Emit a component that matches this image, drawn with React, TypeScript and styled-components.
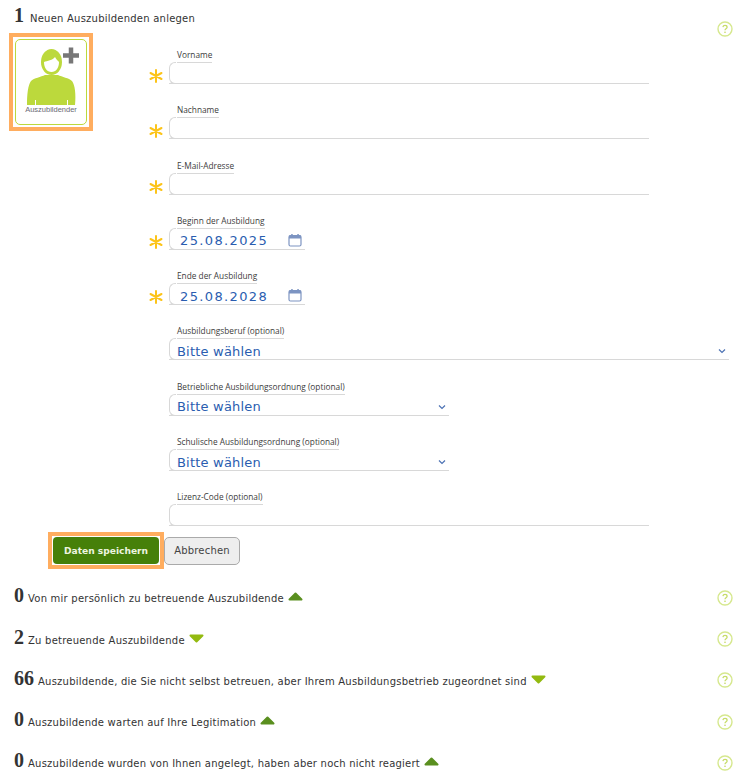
import styled, { createGlobalStyle } from "styled-components";

const GlobalStyle = createGlobalStyle`
  html, body {
    margin: 0;
    padding: 0;
    background: #fff;
  }
  body {
    font-family: "DejaVu Sans", Verdana, sans-serif;
    color: #333;
  }
`;

const Page = styled.div`
  width: 751px;
  height: 780px;
  overflow: hidden;
`;

// Title TOP
const Head = styled.div`
  display: flex;
  justify-content: space-between;
  align-items: flex-start;
  height: 33px;
  padding: 3px 18px 0 14px;
  box-sizing: border-box;
`;

const Title = styled.div`
  display: flex;
  align-items: baseline;
  font-size: 10px;
  letter-spacing: 0.23px;
  color: #333;
`;

const Count = styled.b<{ $gap?: number }>`
  font-family: "Liberation Serif", Georgia, serif;
  font-size: 20px;
  line-height: 24px;
  margin-right: ${(p) => p.$gap ?? 4}px;
  letter-spacing: 0;
  color: #333;
`;

const HelpBox = styled.span<{ $top?: number }>`
  display: block;
  margin-top: ${(p) => p.$top ?? 0}px;
  width: 16px;
  height: 16px;
  flex: none;
`;

// Form MIDDLE
const Body = styled.div`
  display: grid;
  grid-template-columns: 149px 1fr;
`;

const TileFrame = styled.div`
  margin-left: 9px;
  width: 84px;
  height: 98px;
  box-sizing: border-box;
  border: 4px solid #ffad5f;
  padding: 2px;
`;

const Tile = styled.div`
  height: 100%;
  box-sizing: border-box;
  border: 1px solid #bcd93c;
  border-radius: 5px;
  display: flex;
  flex-direction: column;
  align-items: center;
  padding-top: 7px;
`;

const TileLabel = styled.span`
  font-family: "Liberation Sans", Arial, sans-serif;
  font-size: 7.5px;
  line-height: 10px;
  color: #6b6b75;
`;

const Form = styled.div`
  padding-top: 16px;
  display: flex;
  flex-direction: column;
  gap: 20.3px;
`;

const Row = styled.div`
  display: flex;
  align-items: flex-end;
`;

const Star = styled.span`
  display: block;
  width: 20px;
  height: 14px;
  flex: none;
  margin-bottom: 2px;
`;

const Field = styled.div<{ $width: number; $indent?: boolean }>`
  width: ${(p) => p.$width}px;
  margin-left: ${(p) => (p.$indent ? 0 : 20)}px;
`;

const Label = styled.label`
  display: block;
  width: fit-content;
  margin-left: 8px;
  height: 14px;
  line-height: 12px;
  box-sizing: border-box;
  border-bottom: 1px solid #d8d8d8;
  font-family: "Open Sans", "DejaVu Sans", sans-serif;
  font-size: 8.3px;
  color: #3c3c3c;
`;

const Box = styled.div`
  position: relative;
  height: 21px;
  box-sizing: border-box;
  border-bottom: 1px solid #d8d8d8;
  padding: 4px 3px 0 11px;
  display: flex;
  align-items: center;
  justify-content: space-between;
  &::before {
    content: "";
    position: absolute;
    left: 0;
    top: -1px;
    bottom: -1px;
    width: 7px;
    box-sizing: border-box;
    border: 1px solid #d8d8d8;
    border-right: 0;
    border-radius: 6px 0 0 6px;
  }
`;

const DateValue = styled.span`
  font-size: 13px;
  letter-spacing: 1.36px;
  color: #2a5db0;
`;

const SelectValue = styled.span`
  font-size: 13px;
  letter-spacing: 0.2px;
  margin-left: -3px;
  color: #2a5db0;
`;

const Buttons = styled.div`
  display: flex;
  align-items: center;
  margin: 6px 0 0 48px;
`;

const SaveFrame = styled.div`
  border: 4px solid #ffad5f;
  padding: 1px;
  height: 37px;
  box-sizing: border-box;
  display: flex;
`;

const SaveButton = styled.button`
  width: 106px;
  border: 0;
  border-radius: 4px;
  background: #468009;
  color: #eef5e0;
  font-family: "DejaVu Sans", sans-serif;
  font-weight: bold;
  font-size: 9.1px;
  padding: 0;
`;

const CancelButton = styled.button`
  width: 76px;
  height: 28px;
  box-sizing: border-box;
  background: #eeeeee;
  border: 1px solid #aaa;
  border-radius: 5px;
  color: #444;
  font-family: "DejaVu Sans", sans-serif;
  font-size: 10px;
  letter-spacing: 0.2px;
  padding: 0;
`;

// List BOTTOM
const List = styled.div`
  display: flex;
  flex-direction: column;
  margin-top: 14px;
`;

const ListRow = styled.div`
  height: 41.25px;
  box-sizing: border-box;
  padding: 0 18px 0 14px;
  display: flex;
  justify-content: space-between;
  align-items: flex-start;
`;

const Arrow = styled.span`
  display: inline-block;
  margin: 3px 0 0 4px;
  width: 15px;
  height: 9px;
  align-self: center;
`;

const HelpIcon = ({ top }: { top?: number }) => (
  <HelpBox $top={top}>
    <svg width="16" height="16" viewBox="0 0 16 16" fill="none">
      <circle cx="8" cy="8" r="7" stroke="#d6e88e" strokeWidth="1.4" />
      <path d="M5.9 6.2c.2-1.2 1-1.800 2.100-1.800 1.200 0 2.100.7 2.100 1.800 0 1.600-2.100 1.600-2.100 3" stroke="#c6dc68" strokeWidth="1.300" />
      <rect x="7.300" y="10.600" width="1.400" height="1.400" fill="#c6dc68" />
    </svg>
  </HelpBox>
);

const StarIcon = () => (
  <Star>
    <svg width="14" height="14" viewBox="0 0 14 14" stroke="#fcc419" strokeWidth="2" strokeLinecap="round">
      <path d="M7 1v12M1.500 4 12.500 10M1.500 10 12.500 4" />
    </svg>
  </Star>
);

const CalendarIcon = () => (
  <svg width="14" height="14" viewBox="0 1 14 14" fill="none">
    <rect x="1" y="2.500" width="12" height="10.500" rx="1.500" stroke="#7d94c2" strokeWidth="1.200" />
    <rect x="1" y="2.500" width="12" height="3" fill="#7d94c2" />
    <rect x="3.200" y="0.500" width="1.500" height="3" fill="#7d94c2" />
    <rect x="9.300" y="0.500" width="1.500" height="3" fill="#7d94c2" />
  </svg>
);

const Chevron = () => (
  <svg width="8" height="6" viewBox="0 0 8 6" fill="none">
    <path d="M1 1.500 4 4.500 7 1.500" stroke="#4c72b4" strokeWidth="1.200" />
  </svg>
);

const UpArrow = () => (
  <Arrow>
    <svg width="15" height="9" viewBox="0 0 15 9">
      <path d="M7.500 1.500 13.500 7.500H1.500z" fill="#5a8f1f" stroke="#5a8f1f" strokeWidth="2" strokeLinejoin="round" />
    </svg>
  </Arrow>
);

const DownArrow = () => (
  <Arrow>
    <svg width="15" height="9" viewBox="0 0 15 9">
      <path d="M7.500 7.500 13.500 1.500H1.500z" fill="#93ba10" stroke="#93ba10" strokeWidth="2" strokeLinejoin="round" />
    </svg>
  </Arrow>
);

const TraineeIcon = () => (
  <svg width="62" height="58" viewBox="0 0 62 58" style={{ display: "block" }}>
    <path
      d="M7 58c0-11 1-20 4-24 3-3 10-4 14-6h13c4 2 11 3 14 6 3 4 4 13 3 24H48v-5h-1v5H16v-5h-1v5z"
      fill="#bcd93c"
    />
    <ellipse cx="31.500" cy="15" rx="10.500" ry="13" fill="#bcd93c" />
    <path d="M24 15c3-1 9-2 11-5 1 2 3 4 4 5 0 6-3 10-7.500 10S24 21 24 15z" fill="#fff" />
    <path d="M43 8.500h16M51 .5v16" stroke="#777" strokeWidth="4.500" />
  </svg>
);

const textFields = ["Vorname", "Nachname", "E-Mail-Adresse"];

const selects = [
  { label: "Ausbildungsberuf (optional)", width: 560 },
  { label: "Betriebliche Ausbildungsordnung (optional)", width: 280 },
  { label: "Schulische Ausbildungsordnung (optional)", width: 280 },
];

const rows = [
  { count: "0", text: "Von mir persönlich zu betreuende Auszubildende", up: true },
  { count: "2", text: "Zu betreuende Auszubildende", up: false },
  { count: "66", text: "Auszubildende, die Sie nicht selbst betreuen, aber Ihrem Ausbildungsbetrieb zugeordnet sind", up: false },
  { count: "0", text: "Auszubildende warten auf Ihre Legitimation", up: true },
  { count: "0", text: "Auszubildende wurden von Ihnen angelegt, haben aber noch nicht reagiert", up: true },
];

const App = () => {
  return (
    <Page>
      <GlobalStyle />
      <Head>
        <Title>
          <Count $gap={6}>1</Count>
          Neuen Auszubildenden anlegen
        </Title>
        <HelpIcon top={18} />
      </Head>
      <Body>
        <TileFrame>
          <Tile>
            <TraineeIcon />
            <TileLabel>Auszubildender</TileLabel>
          </Tile>
        </TileFrame>
        <Form>
          {textFields.map((label) => (
            <Row key={label}>
              <StarIcon />
              <Field $width={480} $indent>
                <Label>{label}</Label>
                <Box />
              </Field>
            </Row>
          ))}
          {["25.08.2025", "25.08.2028"].map((value, i) => (
            <Row key={value}>
              <StarIcon />
              <Field $width={136} $indent>
                <Label>{i === 0 ? "Beginn der Ausbildung" : "Ende der Ausbildung"}</Label>
                <Box>
                  <DateValue>{value}</DateValue>
                  <CalendarIcon />
                </Box>
              </Field>
            </Row>
          ))}
          {selects.map((item) => (
            <Row key={item.label}>
              <Field $width={item.width}>
                <Label>{item.label}</Label>
                <Box>
                  <SelectValue>Bitte wählen</SelectValue>
                  <Chevron />
                </Box>
              </Field>
            </Row>
          ))}
          <Row>
            <Field $width={480}>
              <Label>Lizenz-Code (optional)</Label>
              <Box />
            </Field>
          </Row>
        </Form>
      </Body>
      <Buttons>
        <SaveFrame>
          <SaveButton>Daten speichern</SaveButton>
        </SaveFrame>
        <CancelButton>Abbrechen</CancelButton>
      </Buttons>
      <List>
        {rows.map((row, i) => (
          <ListRow key={i}>
            <Title>
              <Count>{row.count}</Count>
              {row.text}
              {row.up ? <UpArrow /> : <DownArrow />}
            </Title>
            <HelpIcon top={6.5} />
          </ListRow>
        ))}
      </List>
    </Page>
  );
};

export default App;
